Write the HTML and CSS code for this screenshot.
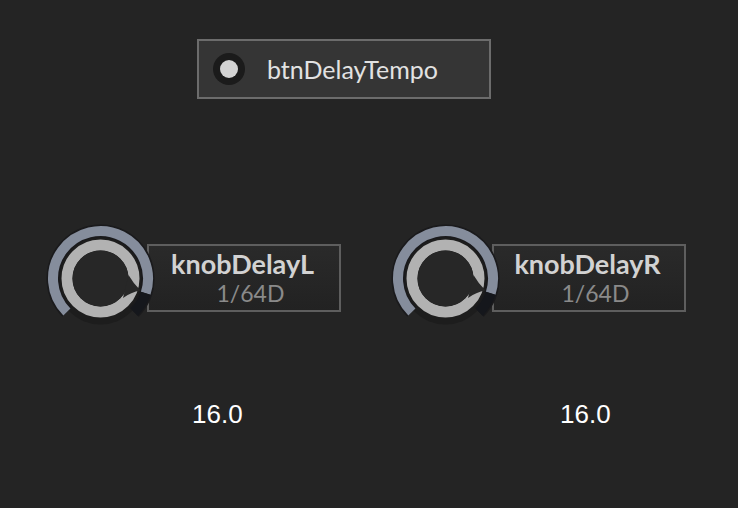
FILE: index.html
```html
<!DOCTYPE html>
<html>
<head>
<meta charset="utf-8">
<link rel="stylesheet" href="styles.css">
</head>
<body>
<div class="canvas">
  <div class="btn">
    <span class="led"><span class="led-dot"></span></span>
    <span class="btn-label">btnDelayTempo</span>
  </div>

  <div class="knob-widget knob-l">
    <div class="knob-box">
      <span class="knob-name">knobDelayL</span>
      <span class="knob-value">1/64D</span>
    </div>
    <svg class="knob" width="111" height="111" viewBox="0 0 111 111">
      <circle cx="55.5" cy="57.5" r="44" fill="#1d1d1d"/>
      <path d="M21.91 89.09 A47.5 47.5 0 1 1 89.09 89.09" fill="none" stroke="#1a1a1c" stroke-width="13"/>
      <path d="M21.91 89.09 A47.5 47.5 0 1 1 100.68 70.18" fill="none" stroke="#858d9c" stroke-width="10"/>
      <path d="M100.68 70.18 A47.5 47.5 0 0 1 89.09 89.09" fill="none" stroke="#15171c" stroke-width="10"/>
      <circle cx="55.5" cy="55.5" r="33.5" fill="none" stroke="#b2b2b2" stroke-width="11"/>
      <circle cx="55.5" cy="55.5" r="28" fill="#272727"/>
      <path d="M83.5 52 Q88 60 95.5 67.5 Q86 69 78 75 Z" fill="#272727"/>
    </svg>
  </div>

  <div class="knob-widget knob-r">
    <div class="knob-box">
      <span class="knob-name">knobDelayR</span>
      <span class="knob-value">1/64D</span>
    </div>
    <svg class="knob" width="111" height="111" viewBox="0 0 111 111">
      <circle cx="55.5" cy="57.5" r="44" fill="#1d1d1d"/>
      <path d="M21.91 89.09 A47.5 47.5 0 1 1 89.09 89.09" fill="none" stroke="#1a1a1c" stroke-width="13"/>
      <path d="M21.91 89.09 A47.5 47.5 0 1 1 100.68 70.18" fill="none" stroke="#858d9c" stroke-width="10"/>
      <path d="M100.68 70.18 A47.5 47.5 0 0 1 89.09 89.09" fill="none" stroke="#15171c" stroke-width="10"/>
      <circle cx="55.5" cy="55.5" r="33.5" fill="none" stroke="#b2b2b2" stroke-width="11"/>
      <circle cx="55.5" cy="55.5" r="28" fill="#272727"/>
      <path d="M83.5 52 Q88 60 95.5 67.5 Q86 69 78 75 Z" fill="#272727"/>
    </svg>
  </div>

  <div class="readout readout-l">16.0</div>
  <div class="readout readout-r">16.0</div>
</div>
</body>
</html>
```

FILE: styles.css
```css
html, body {
  margin: 0;
  padding: 0;
  background: #242424;
}

.canvas {
  position: relative;
  width: 738px;
  height: 508px;
  overflow: hidden;
  background: #242424;
}

.btn {
  position: absolute;
  left: 197px;
  top: 39px;
  width: 290px;
  height: 56px;
  border: 2px solid #6c6c6c;
  background: #353535;
  display: flex;
  align-items: center;
}

.led {
  margin-left: 14px;
  width: 32px;
  height: 32px;
  border-radius: 50%;
  background: #1b1b1b;
  display: flex;
  align-items: center;
  justify-content: center;
}

.led-dot {
  width: 18px;
  height: 18px;
  border-radius: 50%;
  background: #d3d3d3;
}

.btn-label {
  margin-left: 22px;
  font-family: Lato, "Noto Sans", sans-serif;
  font-size: 25px;
  color: #e2e2e2;
}

.knob-widget {
  position: absolute;
  top: 223px;
  width: 300px;
  height: 111px;
}

.knob-l { left: 45px; }
.knob-r { left: 390px; }

.knob {
  position: absolute;
  left: 0;
  top: 0;
}

.knob-box {
  position: absolute;
  left: 102px;
  top: 21px;
  width: 190px;
  height: 64px;
  border: 2px solid #5e5e5e;
  background: linear-gradient(#2a2a2a, #222222);
  display: flex;
  flex-direction: column;
  align-items: center;
  font-family: Lato, "Noto Sans", sans-serif;
}

.knob-name {
  font-weight: bold;
  font-size: 27px;
  line-height: 27px;
  margin-top: 4px;
  color: #d2d2d2;
  margin-left: -3px;
}

.knob-value {
  font-size: 23px;
  line-height: 23px;
  color: #8a8a8a;
  margin-top: 5px;
  margin-left: 13px;
}

.readout {
  position: absolute;
  top: 399px;
  font-family: "Liberation Sans", Arial, sans-serif;
  font-size: 26px;
  color: #ffffff;
}

.readout-l { left: 192px; }
.readout-r { left: 560px; }
```
